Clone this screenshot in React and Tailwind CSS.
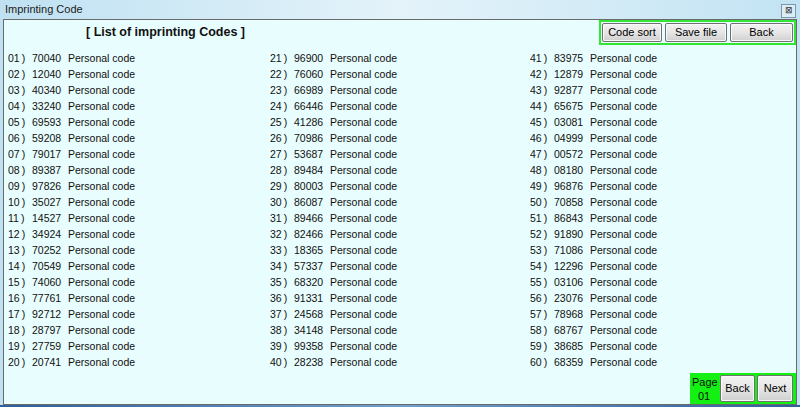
const col1 = ['70040', '12040', '40340', '33240', '69593', '59208', '79017', '89387', '97826', '35027', '14527', '34924', '70252', '70549', '74060', '77761', '92712', '28797', '27759', '20741'];
const col2 = ['96900', '76060', '66989', '66446', '41286', '70986', '53687', '89484', '80003', '86087', '89466', '82466', '18365', '57337', '68320', '91331', '24568', '34148', '99358', '28238'];
const col3 = ['83975', '12879', '92877', '65675', '03081', '04999', '00572', '08180', '96876', '70858', '86843', '91890', '71086', '12296', '03106', '23076', '78968', '68767', '38685', '68359'];

function pad(n) {
  return n < 10 ? '0' + n : '' + n;
}

function CodeColumn({ codes, start, width }) {
  return (
    <div className="flex flex-col" style={{ width }}>
      {codes.map((code, i) => (
        <div key={i} className="flex h-[16px] items-center">
          <span className="w-[24px] shrink-0">
            {pad(start + i)}<span className="ml-[2px]">)</span>
          </span>
          <span className="w-[36px] shrink-0">{code}</span>
          <span>Personal code</span>
        </div>
      ))}
    </div>
  );
}

function WinButton({ children, className }) {
  return (
    <button className={`flex items-center justify-center rounded-[2px] border border-[#707070] bg-gradient-to-b from-[#f2f2f2] via-[#e6e6e6] to-[#d0d0d0] text-[11px] text-black shadow-[inset_0_0_0_1px_#fafafa] ${className}`}>
      {children}
    </button>
  );
}

export default function App() {
  return (
    <div className="flex h-[407px] w-[800px] flex-col overflow-hidden bg-gradient-to-r from-[#bfe1f2] via-[#e4f3fa] to-[#c2e3f3] font-['Liberation_Sans',Arial,sans-serif] text-[#111]">
      {/* title bar */}
      <div className="flex h-[19px] shrink-0 items-center justify-between pl-[5px] pr-[4px]">
        <span className="text-[11px] text-[#1a1a1a]">Imprinting Code</span>
        <div className="mt-[2px] flex h-[14px] w-[15px] items-center justify-center border border-[#7f97a8] bg-[#dbeef8] text-[9px] leading-none text-[#333]">
          ⊠
        </div>
      </div>

      {/* panel */}
      <div className="mx-[3px] flex h-[386px] shrink-0 flex-col border border-[#6a6a6a] bg-[#e8fdfd] text-[10.5px]">
        <div className="flex h-[25px] shrink-0 items-start">
          <div className="flex flex-1 justify-start pl-[82px] pt-[3px]">
            <span className="text-[12.5px] font-bold">[ List of imprinting Codes ]</span>
          </div>
          <div className="flex h-[25px] w-[197px] items-center gap-[3px] border-2 border-[#35e535] px-[1px]">
            <WinButton className="h-[19px] w-[60px]">Code sort</WinButton>
            <WinButton className="h-[19px] w-[62px]">Save file</WinButton>
            <WinButton className="h-[19px] w-[63px]">Back</WinButton>
          </div>
        </div>

        <div className="mt-[6px] flex pl-[4px]">
          <CodeColumn codes={col1} start={1} width={262} />
          <CodeColumn codes={col2} start={21} width={260} />
          <CodeColumn codes={col3} start={41} width={240} />
        </div>

        <div className="mt-auto flex justify-end">
          <div className="flex h-[31px] w-[106px] items-center gap-[2px] bg-[#14f014] pl-[2px] pr-[2px]">
            <div className="flex w-[26px] flex-col items-start text-[11px] leading-[14px]">
              <span>Page</span>
              <span className="pl-[6px]">01</span>
            </div>
            <WinButton className="h-[27px] w-[35px]">Back</WinButton>
            <WinButton className="h-[27px] w-[36px]">Next</WinButton>
          </div>
        </div>
      </div>

      <div className="flex-1 bg-gradient-to-r from-[#2f5f98] via-[#6f9fd0] to-[#2f5f98]" />
    </div>
  );
}
